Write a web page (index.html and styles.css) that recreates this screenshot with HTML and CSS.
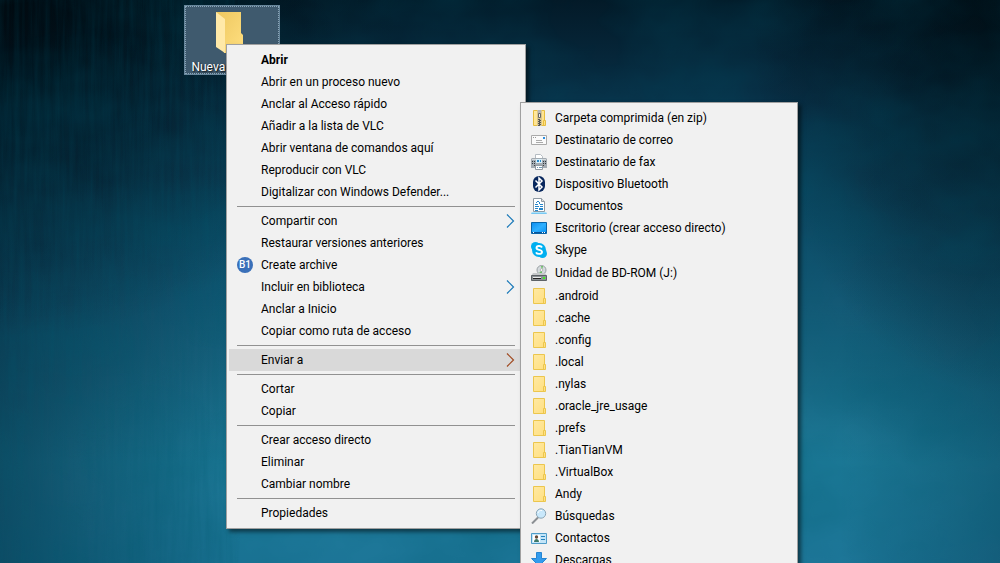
FILE: index.html
```html
<!DOCTYPE html>
<html lang="es">
<head>
<meta charset="utf-8">
<meta name="viewport" content="width=device-width, initial-scale=1">
<title>Escritorio</title>
<link rel="stylesheet" href="styles.css">
</head>
<body>
<svg class="defs" aria-hidden="true">
  <defs>
    <linearGradient id="gold" x1="0" y1="0" x2="1" y2="1"><stop offset="0" stop-color="#ffe9a2"/><stop offset="1" stop-color="#ffdf80"/></linearGradient>
    <linearGradient id="fold" x1="0" y1="0" x2="1" y2="1"><stop offset="0" stop-color="#edc75f"/><stop offset="1" stop-color="#ffdf80"/></linearGradient>
    <linearGradient id="screen" x1="0" y1="0" x2="1" y2="1"><stop offset="0" stop-color="#0a8cf0"/><stop offset=".5" stop-color="#2fb0ff"/><stop offset="1" stop-color="#0791f5"/></linearGradient>
  </defs>
  <symbol id="folder" viewBox="0 0 16 16">
    <path d="M2.500.5h11v10h1v5h-12z" fill="url(#gold)" stroke="#ecc64d"/>
    <path d="M12.500 15v-4.500h1.500" fill="none" stroke="#ecc64d"/>
  </symbol>
  <symbol id="zip" viewBox="0 0 16 16">
    <path d="M2.500.5h11v10h1v5h-12z" fill="url(#gold)" stroke="#e6bd3f"/>
    <path d="M12.500 15v-4.500h1.500" fill="none" stroke="#e6bd3f"/>
    <path d="M6 0h5v16H6z" fill="#d9c68c"/>
    <path d="M7 0h3v3H7z" fill="#b5b5b5"/>
    <path d="M7.500 3.500h2v4h-2z" fill="#eee" stroke="#666"/>
    <path d="M7 9h2v1H7zm1 1h2v1H8zm-1 1h2v1H7zm1 1h2v1H8zm-1 1h2v1H7zm1 1h2v1H8zm-1 1h2v1H7z" fill="#555"/>
  </symbol>
  <symbol id="mail" viewBox="0 0 16 16">
    <path d="M.5 3.500h15v9H.5z" fill="#fafafa" stroke="#aaa"/>
    <path d="M2 5h1v1H2zm2 0h1v1H4z" fill="#999"/><path d="M12 5h2v2h-2z" fill="#2b8de0"/>
    <path d="M5 8h6v1H5zm0 2h7v1H5z" fill="#aaa"/>
  </symbol>
  <symbol id="fax" viewBox="0 0 16 16">
    <path d="M4.500.5h5l2 2v3h-7z" fill="#fff" stroke="#b5bcc2"/>
    <path d="M1 4h14l1 1v9H0V5z" fill="#a3abb2"/>
    <path d="M1 5h14v1H1z" fill="#d5d9dc"/>
    <path d="M5 5h6v4H5z" fill="#d8effa"/><path d="M6 6h2v2H6zm3 0h1v2H9z" fill="#2b8bc9"/>
    <path d="M1 7h1v1H1zm2 0h1v1H3zM1 9h1v1H1zm2 0h1v1H3zm9-2h1v1h-1zm2 0h1v1h-1zm-2 2h1v1h-1zm2 0h1v1h-1z" fill="#303840"/>
    <path d="M3 11h10v1H3z" fill="#444"/>
    <path d="M4.500 11.500h7v4h-7z" fill="#fff" stroke="#929aa2"/><path d="M6 13h1v1H6zm2 0h3v1H8z" fill="#729bb8"/>
  </symbol>
  <symbol id="bluetooth" viewBox="0 0 16 16">
    <rect x="2" width="12" height="16" rx="6" fill="#08275d"/>
    <path d="M4.500 4.500l6.500 6.500-3 3V2l3 3-6.500 6.500" fill="none" stroke="#fff" stroke-width="1.500"/>
  </symbol>
  <symbol id="document" viewBox="0 0 16 16">
    <path d="M2.500.5h8l3 3v10h-11z" fill="#fff" stroke="#8f9aa3"/><path d="M10.500.5v3h3" fill="#ddd" stroke="#8f9aa3"/>
    <path d="M6 3h2v1H6zM5 4h1v1H5zm3 0h1v2H8zM4 6h3v1H4zm5 0h3v1H9zM4 8h4v1H4zm5 0h3v1H9zm-5 2h3v1H4zm4 0h4v2H8zm-4 2h3v1H4z" fill="#2686ca"/>
    <path d="M1 14h14l1 2H0z" fill="#78c8f2"/><path d="M1 14h14v1H1z" fill="#a9e2fb"/>
  </symbol>
  <symbol id="desktop" viewBox="0 0 16 16">
    <path d="M.5 2.500h15v11H.5z" fill="url(#screen)" stroke="#0864a8"/>
    <path d="M1 12h14v1H1z" fill="#07539a"/><path d="M2 12h1v1H2zm9 0h1v1h-1zm2 0h1v1h-1z" fill="#fff"/>
  </symbol>
  <symbol id="skype" viewBox="0 0 16 16">
    <circle cx="8" cy="8" r="7" fill="#00aff0"/><circle cx="4.500" cy="4.500" r="4.500" fill="#00aff0"/><circle cx="11.500" cy="11.500" r="4.500" fill="#00aff0"/>
    <path d="M11 5.500C10 3.500 5.500 3.500 5.500 6c0 2.500 5.500 1.300 5.500 4 0 2.500-5 2.500-6 .3" fill="none" stroke="#fff" stroke-width="1.900"/>
  </symbol>
  <symbol id="drive" viewBox="0 0 16 16">
    <circle cx="10.500" cy="5" r="4.500" fill="#d5dadd" stroke="#9aa0a4"/><path d="M10 1h2l-1 4zM8 8l3-3v4z" fill="#67bd62"/><circle cx="10.500" cy="5" r="1.300" fill="#fff" stroke="#999" stroke-width=".6"/>
    <path d="M2 8h12l2 3H0z" fill="#c5c8ca"/><path d="M.5 10.500h15v5H.5z" fill="#8b9195" stroke="#5d6266"/>
    <path d="M2 12h8v1H2z" fill="#e9e9e9"/><path d="M2 13h8v1H2z" fill="#222"/><path d="M12 12h2v2h-2z" fill="#3ff01f"/>
  </symbol>
  <symbol id="search" viewBox="0 0 16 16">
    <path d="M1 15.500l6-6" stroke="#8b8f93" stroke-width="2"/><circle cx="10" cy="5.500" r="4.700" fill="#c9e8fb" stroke="#8ba5b5"/><path d="M7 5c.5-2 2-2.700 4-2.500" fill="none" stroke="#fff"/>
  </symbol>
  <symbol id="contact" viewBox="0 0 16 16">
    <path d="M.5 3.500h15v10H.5z" fill="#c3e5f8" stroke="#4f9cc8"/><path d="M2 5h7v7H2z" fill="#fff"/>
    <circle cx="5.500" cy="7" r="1.700" fill="#664a38"/><path d="M3 12c0-4 5-4 5 0z" fill="#3d7868"/>
    <path d="M10 6h4v1h-4zm0 3h4v1h-4z" fill="#2581bd"/>
  </symbol>
  <symbol id="download" viewBox="0 0 16 16">
    <path d="M5.500.5h5v6h5L8 14 .5 6.500h5z" fill="#329bed" stroke="#2585d2"/>
  </symbol>
  <symbol id="chevron" viewBox="0 0 10 16">
    <path d="M2 1.500l6.500 6.500-6.500 6.500" fill="none" stroke="currentColor" stroke-width="1.200"/>
  </symbol>
</svg>

<main class="wallpaper">
  <svg class="texture" aria-hidden="true">
    <filter id="grain" x="0" y="0" width="100%" height="100%"><feTurbulence type="fractalNoise" baseFrequency=".2 .012" numOctaves="3" seed="4"/><feColorMatrix values="0 0 0 0 0  0 0 0 0 .1  0 0 0 0 .16  1 0 0 0 -.3"/></filter>
    <filter id="cloud" x="0" y="0" width="100%" height="100%"><feTurbulence type="fractalNoise" baseFrequency=".008 .012" numOctaves="4" seed="9"/><feColorMatrix values="0 0 0 0 0  0 0 0 0 .1  0 0 0 0 .16  1 0 0 0 -.3"/></filter>
    <rect class="streaks" width="24%" height="100%" filter="url(#grain)"/>
    <rect class="clouds" width="100%" height="100%" filter="url(#cloud)"/>
  </svg>

  <button class="shortcut" type="button">
    <svg class="shortcut-icon" viewBox="0 0 28 42" aria-hidden="true">
      <path d="M0 0h25v21l2 2v18H8z" fill="url(#fold)"/>
      <path d="M0 0l9 7v34l-9-6z" fill="#ffe9a8"/>
    </svg>
    <span>Nueva carpeta</span>
  </button>

  <div class="menu menu-main" role="menu">
    <button class="item default" role="menuitem">Abrir</button>
    <button class="item" role="menuitem">Abrir en un proceso nuevo</button>
    <button class="item" role="menuitem">Anclar al Acceso rápido</button>
    <button class="item" role="menuitem">Añadir a la lista de VLC</button>
    <button class="item" role="menuitem">Abrir ventana de comandos aquí</button>
    <button class="item" role="menuitem">Reproducir con VLC</button>
    <button class="item" role="menuitem">Digitalizar con Windows Defender...</button>
    <hr class="separator">
    <button class="item" role="menuitem">Compartir con<svg class="arrow"><use href="#chevron"/></svg></button>
    <button class="item" role="menuitem">Restaurar versiones anteriores</button>
    <button class="item with-icon" role="menuitem"><span class="badge" aria-hidden="true">B1</span>Create archive</button>
    <button class="item" role="menuitem">Incluir en biblioteca<svg class="arrow"><use href="#chevron"/></svg></button>
    <button class="item" role="menuitem">Anclar a Inicio</button>
    <button class="item" role="menuitem">Copiar como ruta de acceso</button>
    <hr class="separator">
    <button class="item active" role="menuitem">Enviar a<svg class="arrow"><use href="#chevron"/></svg></button>
    <hr class="separator">
    <button class="item" role="menuitem">Cortar</button>
    <button class="item" role="menuitem">Copiar</button>
    <hr class="separator">
    <button class="item" role="menuitem">Crear acceso directo</button>
    <button class="item" role="menuitem">Eliminar</button>
    <button class="item" role="menuitem">Cambiar nombre</button>
    <hr class="separator">
    <button class="item" role="menuitem">Propiedades</button>
  </div>

  <div class="menu menu-send" role="menu">
    <button class="item with-icon" role="menuitem"><svg class="icon"><use href="#zip"/></svg>Carpeta comprimida (en zip)</button>
    <button class="item with-icon" role="menuitem"><svg class="icon"><use href="#mail"/></svg>Destinatario de correo</button>
    <button class="item with-icon" role="menuitem"><svg class="icon"><use href="#fax"/></svg>Destinatario de fax</button>
    <button class="item with-icon" role="menuitem"><svg class="icon"><use href="#bluetooth"/></svg>Dispositivo Bluetooth</button>
    <button class="item with-icon" role="menuitem"><svg class="icon"><use href="#document"/></svg>Documentos</button>
    <button class="item with-icon" role="menuitem"><svg class="icon"><use href="#desktop"/></svg>Escritorio (crear acceso directo)</button>
    <button class="item with-icon" role="menuitem"><svg class="icon"><use href="#skype"/></svg>Skype</button>
    <button class="item with-icon tall" role="menuitem"><svg class="icon"><use href="#drive"/></svg>Unidad de BD-ROM (J:)</button>
    <button class="item with-icon" role="menuitem"><svg class="icon"><use href="#folder"/></svg>.android</button>
    <button class="item with-icon" role="menuitem"><svg class="icon"><use href="#folder"/></svg>.cache</button>
    <button class="item with-icon" role="menuitem"><svg class="icon"><use href="#folder"/></svg>.config</button>
    <button class="item with-icon" role="menuitem"><svg class="icon"><use href="#folder"/></svg>.local</button>
    <button class="item with-icon" role="menuitem"><svg class="icon"><use href="#folder"/></svg>.nylas</button>
    <button class="item with-icon" role="menuitem"><svg class="icon"><use href="#folder"/></svg>.oracle_jre_usage</button>
    <button class="item with-icon" role="menuitem"><svg class="icon"><use href="#folder"/></svg>.prefs</button>
    <button class="item with-icon" role="menuitem"><svg class="icon"><use href="#folder"/></svg>.TianTianVM</button>
    <button class="item with-icon" role="menuitem"><svg class="icon"><use href="#folder"/></svg>.VirtualBox</button>
    <button class="item with-icon" role="menuitem"><svg class="icon"><use href="#folder"/></svg>Andy</button>
    <button class="item with-icon" role="menuitem"><svg class="icon"><use href="#search"/></svg>Búsquedas</button>
    <button class="item with-icon" role="menuitem"><svg class="icon"><use href="#contact"/></svg>Contactos</button>
    <button class="item with-icon" role="menuitem"><svg class="icon"><use href="#download"/></svg>Descargas</button>
  </div>
</main>
</body>
</html>
```

FILE: styles.css
```css
* {
  box-sizing: border-box;
}

body {
  margin: 0;
  font: 12px/16px Roboto, "Noto Sans", sans-serif;
  color: #000;
}

.defs {
  position: absolute;
  width: 0;
  height: 0;
}

.wallpaper {
  position: relative;
  height: 100vh;
  overflow: hidden;
  background:
    radial-gradient(ellipse 40% 60% at 0% 0%, rgba(0, 2, 4, 0.7), transparent),
    radial-gradient(ellipse 25% 70% at 100% 0%, rgba(0, 8, 12, 0.7), transparent),
    linear-gradient(90deg, rgba(2, 30, 48, 0.5), transparent 24%, transparent 84%, rgba(2, 40, 60, 0.3)),
    linear-gradient(#031a28, #09324a 20%, #10506c 45%, #176480 65%, #1d7a98 82%, #1d7698);
}

.texture {
  position: absolute;
  inset: 0;
  width: 100%;
  height: 100%;
}

.streaks {
  opacity: 0.3;
}

.clouds {
  opacity: 0.5;
}

.shortcut {
  position: absolute;
  left: 184px;
  top: 5px;
  display: flex;
  flex-direction: column;
  align-items: center;
  gap: 5px;
  width: 96px;
  height: 70px;
  padding: 6px 4px 0 0;
  border: 1px solid #67869b;
  outline: 1px dotted #8ca6b8;
  outline-offset: -2px;
  background: #3f5a6e;
  font: inherit;
  line-height: 16px;
  color: #fff;
  text-shadow: 1px 1px 2px #000;
  white-space: nowrap;
}

.shortcut-icon {
  flex: none;
  width: 28px;
  height: 42px;
}

.menu {
  position: absolute;
  display: flex;
  flex-direction: column;
  padding: 4px 2px;
  border: 1px solid #a0a0a0;
  background: #f1f1f1;
  box-shadow: 3px 3px 4px rgba(0, 0, 0, 0.5);
}

.menu-main {
  left: 226px;
  top: 44px;
  width: 300px;
}

.menu-send {
  left: 520px;
  top: 102px;
  width: 278px;
}

.item {
  display: flex;
  align-items: center;
  gap: 8px;
  min-height: 22px;
  padding: 0 8px 0 32px;
  border: 0;
  background: none;
  font: inherit;
  color: inherit;
  text-align: left;
  white-space: nowrap;
}

.with-icon {
  padding-left: 8px;
}

.tall {
  min-height: 24px;
}

.default {
  font-weight: 700;
}

.active {
  background: #d9d9d9;
}

.icon {
  flex: none;
  width: 16px;
  height: 16px;
}

.badge {
  flex: none;
  width: 16px;
  height: 16px;
  border-radius: 50%;
  background: #3a70b9;
  font-size: 10px;
  font-weight: 500;
  text-align: center;
  color: #fff;
}

.arrow {
  flex: none;
  width: 10px;
  height: 16px;
  margin-left: auto;
  color: #1878b8;
}

.active .arrow {
  color: #a04a20;
}

.separator {
  height: 1px;
  margin: 3px 8px;
  border: 0;
  background: #919191;
}
```
